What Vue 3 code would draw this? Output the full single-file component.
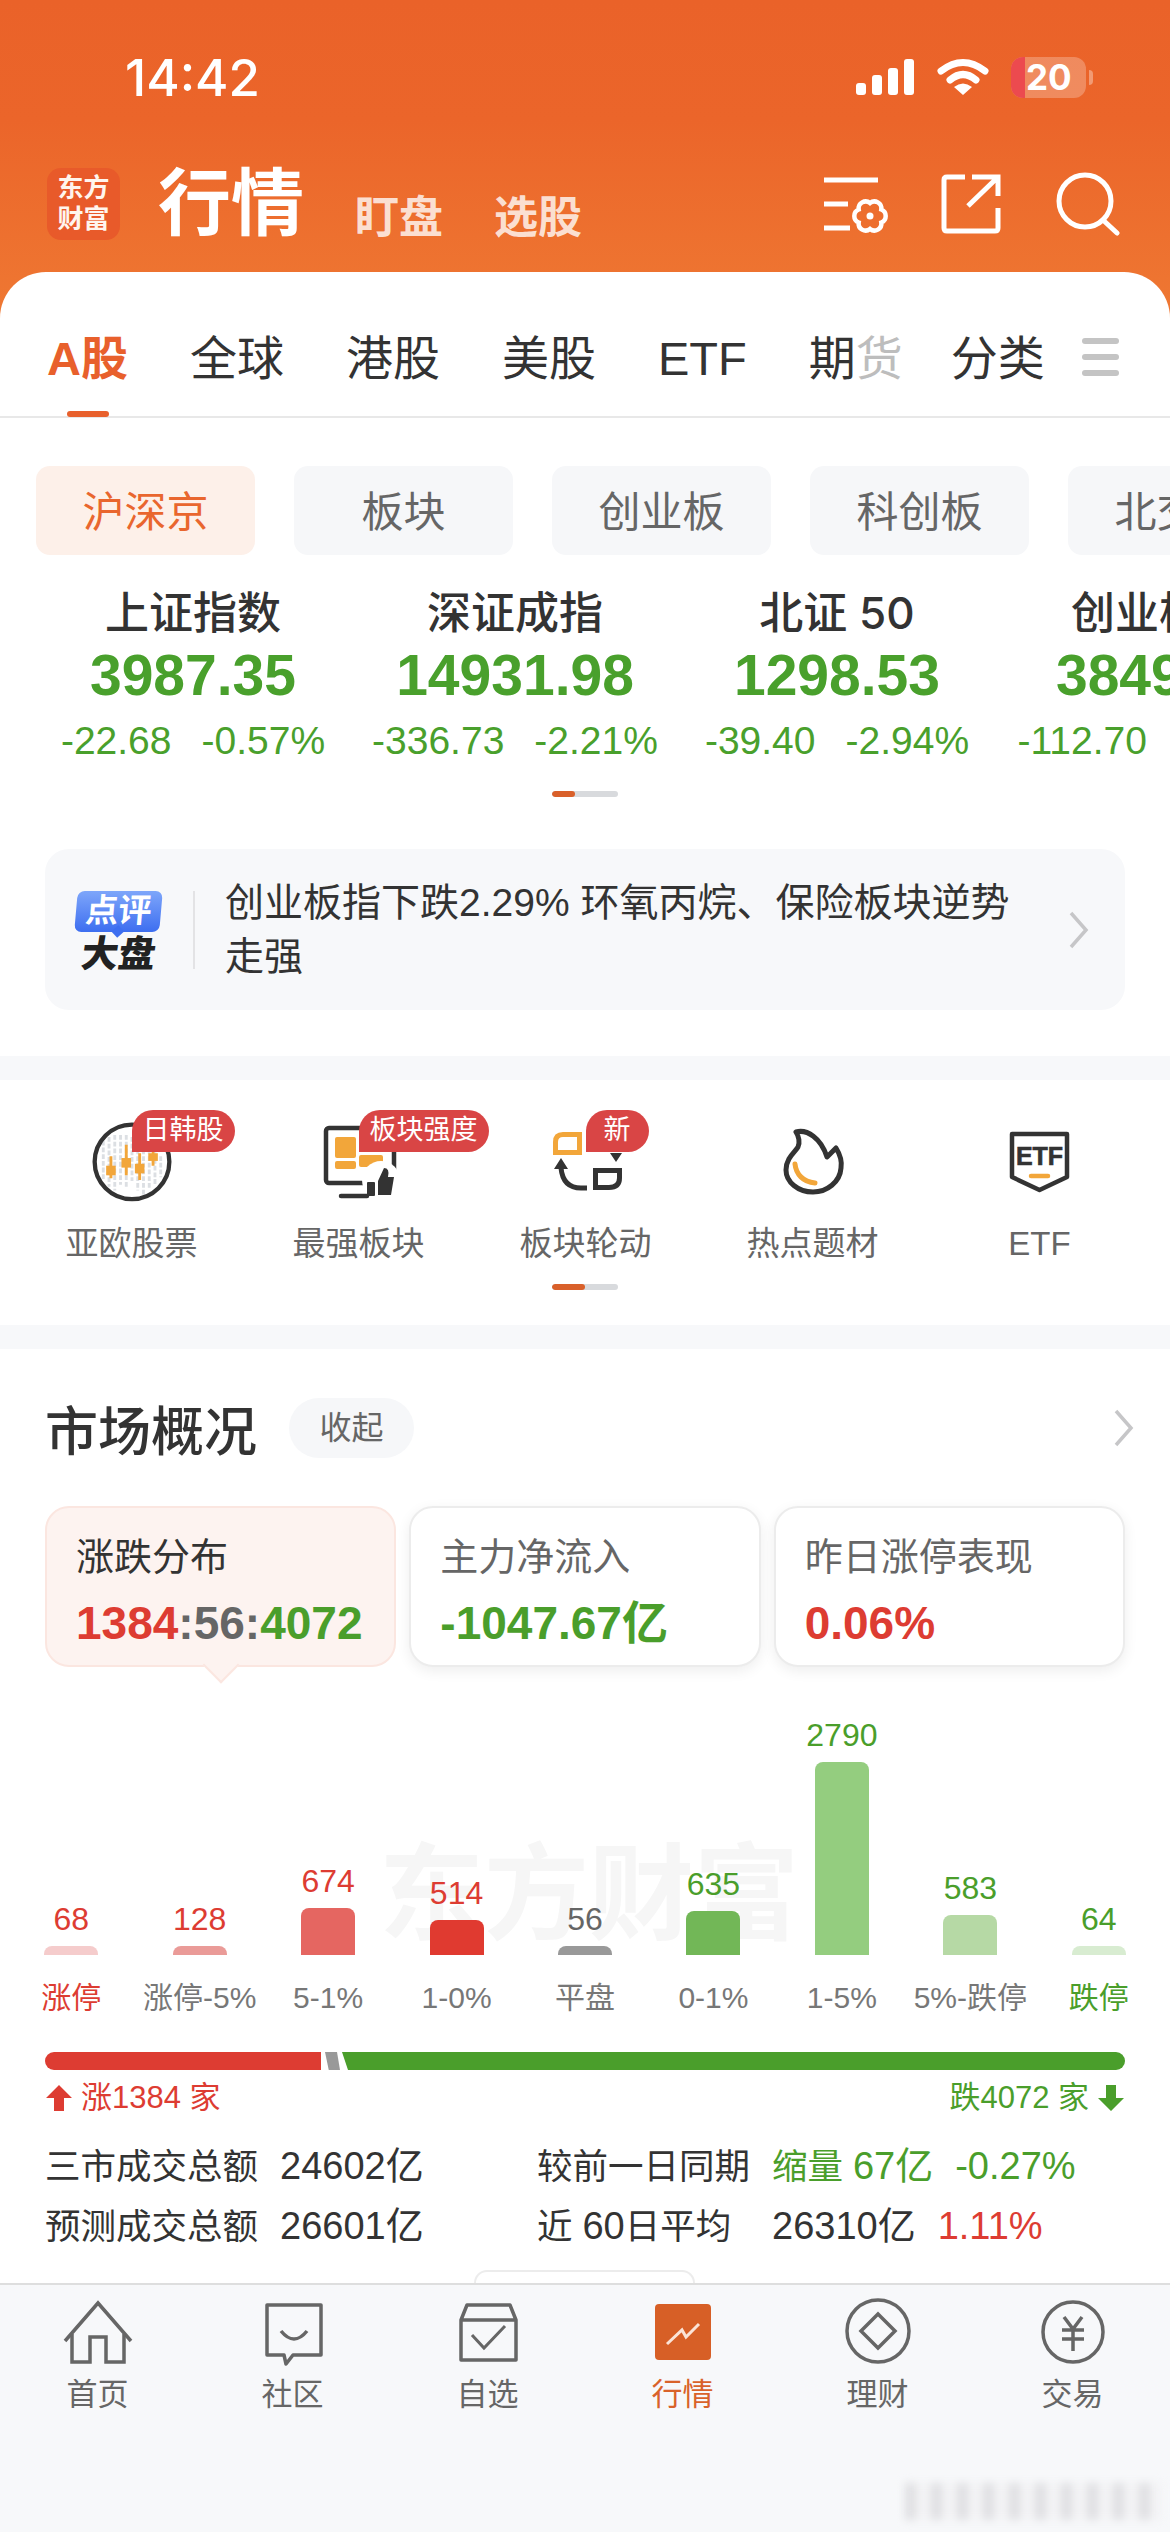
<template>
  <div class="app">
    <div class="top">
      <div class="status-bar">
        <span class="time">14:42</span>
        <div class="status-icons">
          <svg width="60" height="38" viewBox="0 0 60 38">
            <rect x="1" y="25" width="10" height="12" rx="3" fill="#fff" />
            <rect x="17" y="17" width="10" height="20" rx="3" fill="#fff" />
            <rect x="33" y="10" width="10" height="27" rx="3" fill="#fff" />
            <rect x="49" y="1" width="10" height="36" rx="3" fill="#fff" />
          </svg>
          <svg width="52" height="38" viewBox="0 0 52 38" fill="none">
            <path d="M4 13 Q26 -4 48 13" stroke="#fff" stroke-width="7" stroke-linecap="round" />
            <path d="M13 22 Q26 11 39 22" stroke="#fff" stroke-width="7" stroke-linecap="round" />
            <path d="M26 37 L17 29 Q26 22 35 29 Z" fill="#fff" />
          </svg>
          <div class="battery">
            <span class="battery-low"></span>
            <span class="battery-num">20</span>
            <span class="battery-tip"></span>
          </div>
        </div>
      </div>

      <div class="nav">
        <div class="logo"><span>东方</span><span>财富</span></div>
        <span class="nav-title">行情</span>
        <span class="nav-sub">盯盘</span>
        <span class="nav-sub">选股</span>
        <div class="nav-icons">
          <svg width="66" height="66" viewBox="0 0 66 66" fill="none" stroke="#fff" stroke-width="5">
            <path d="M0 9 H54 M0 33 H24 M0 57 H26" />
            <g transform="translate(46 45)">
              <path d="M11.3 -6.5 A7 7 0 0 1 11.3 6.5 A7 7 0 0 1 0 13 A7 7 0 0 1 -11.3 6.5 A7 7 0 0 1 -11.3 -6.5 A7 7 0 0 1 0 -13 A7 7 0 0 1 11.3 -6.5 Z" stroke-width="4.5" />
              <circle r="3.5" fill="#fff" stroke="none" />
            </g>
          </svg>
          <svg width="64" height="66" viewBox="0 0 64 66" fill="none" stroke="#fff" stroke-width="5">
            <path d="M25 6 H7 Q4 6 4 9 V57 Q4 60 7 60 H55 Q58 60 58 57 V37" />
            <path d="M32 6 H58 V25 M28 35 L57 7" />
          </svg>
          <svg width="66" height="66" viewBox="0 0 66 66" fill="none" stroke="#fff" stroke-width="5">
            <circle cx="31" cy="30" r="26" />
            <path d="M49 49 L63 62" stroke-linecap="round" />
          </svg>
        </div>
      </div>

      <div class="tabs">
        <span class="tab active">A股</span>
        <span class="tab">全球</span>
        <span class="tab">港股</span>
        <span class="tab">美股</span>
        <span class="tab">ETF</span>
        <span class="tab">期<i class="faded">货</i></span>
        <span class="tab tab-last">分类</span>
        <span class="tab-menu"><b></b><b></b><b></b></span>
      </div>
    </div>

    <div class="main">
      <div class="chips">
        <span v-for="(c, i) in chips" :key="c" :class="['chip', { on: i === 0 }]">{{ c }}</span>
      </div>

      <div class="indexes">
        <div v-for="item in indexes" :key="item.name" class="index-card">
          <div class="index-name">{{ item.name }}</div>
          <div class="index-value">{{ item.value }}</div>
          <div class="index-change">
            <span>{{ item.diff }}</span>
            <span>{{ item.pct }}</span>
          </div>
        </div>
      </div>
      <div class="dots dots-short"><i></i></div>

      <div class="comment">
        <div class="comment-icon">
          <div class="bubble">点评</div>
          <div class="bubble-sub">大盘</div>
        </div>
        <div class="comment-text">创业板指下跌2.29% 环氧丙烷、保险板块逆势走强</div>
        <svg class="comment-arrow" width="20" height="38" viewBox="0 0 20 38" fill="none" stroke="#c6c6c8" stroke-width="3.5">
          <path d="M2 2 L17 19 L2 36" />
        </svg>
      </div>

      <div class="band"></div>

      <div class="shortcuts">
        <div class="shortcut">
          <div class="shortcut-icon">
            <svg width="100" height="90" viewBox="0 0 100 94" fill="none">
              <g stroke="#dcdfe3" stroke-width="3" stroke-dasharray="5 2">
                <path d="M20 28 V70 M26 24 V76 M32 22 V80 M38 22 V74 M44 22 V78 M50 24 V70 M56 30 V80 M62 30 V84 M68 30 V78 M74 40 V74 M80 44 V66" />
              </g>
              <g stroke="#f2a63a" stroke-width="3">
                <path d="M28 44 V67 M44 32 V64 M58 41 V69 M72 36 V54" />
              </g>
              <g fill="#f2a63a">
                <rect x="23" y="54" width="10" height="10" />
                <rect x="39" y="46" width="10" height="10" />
                <rect x="53" y="52" width="10" height="10" />
                <rect x="67" y="41" width="10" height="8" />
              </g>
              <circle cx="50" cy="50" r="39" stroke="#333" stroke-width="4.5" />
            </svg>
          </div>
          <span class="badge">日韩股</span>
          <div class="shortcut-label">亚欧股票</div>
        </div>

        <div class="shortcut">
          <div class="shortcut-icon">
            <svg width="80" height="90" viewBox="-2 0 80 90" fill="none">
              <rect x="5" y="14" width="68" height="55" rx="3" stroke="#333" stroke-width="4.5" />
              <path d="M20 82 H46" stroke="#333" stroke-width="4.5" stroke-linecap="round" />
              <rect x="14" y="23" width="21" height="21" rx="2" fill="#f2a63a" />
              <rect x="14" y="47" width="21" height="8" rx="2" fill="#f2a63a" />
              <rect x="38" y="41" width="24" height="12" rx="2" fill="#f2a63a" />
              <circle cx="60" cy="66" r="19" fill="#fff" />
              <rect x="46" y="68" width="8" height="14" rx="1" fill="#333" />
              <path d="M57 67 L63 54 Q69 54 67 63 H73 L70 81 H57 Z" fill="#333" />
            </svg>
          </div>
          <span class="badge">板块强度</span>
          <div class="shortcut-label">最强板块</div>
        </div>

        <div class="shortcut">
          <div class="shortcut-icon">
            <svg width="80" height="90" viewBox="-3 0 80 90" fill="none">
              <path d="M6.5 38.5 V28 Q6.5 20.5 14 20.5 H30.5 V38.5 Z" stroke="#f2a63a" stroke-width="5" />
              <path d="M46.5 56.5 H70.5 V64 Q70.5 73.5 60 73.5 H46.5 Z" stroke="#333" stroke-width="5" />
              <path d="M38 74 H32 Q14 74 12 54" stroke="#333" stroke-width="5" />
              <path d="M12 44 L5 55 H19 Z M61 39 H73 L67 48 Z" fill="#333" />
            </svg>
          </div>
          <span class="badge badge-new">新</span>
          <div class="shortcut-label">板块轮动</div>
        </div>

        <div class="shortcut">
          <div class="shortcut-icon">
            <svg width="80" height="90" viewBox="2 0 80 90" fill="none">
              <path d="M25 18 C36 15 50 24 56 43 C59 40 62 37 65 34 C70 42 71 48 70 54 C69 68 56 78 42 78 C27 78 15 68 15 56 C15 44 24 38 27 33 C29 29 28 22 25 18 Z" stroke="#333" stroke-width="5" stroke-linejoin="round" />
              <path d="M24 50 C25 60 32 68 44 69" stroke="#f2a63a" stroke-width="5" stroke-linecap="round" />
            </svg>
          </div>
          <div class="shortcut-label">热点题材</div>
        </div>

        <div class="shortcut">
          <div class="shortcut-icon">
            <svg width="84" height="90" viewBox="0 0 84 90" fill="none">
              <path d="M14 20 H69 V63 L41.5 76 L14 63 Z" stroke="#333" stroke-width="4.5" stroke-linejoin="round" />
              <text x="41.5" y="51" text-anchor="middle" class="etf-mark">ETF</text>
              <path d="M33 62 H50" stroke="#f2a63a" stroke-width="4.5" stroke-linecap="round" />
            </svg>
          </div>
          <div class="shortcut-label">ETF</div>
        </div>
      </div>
      <div class="dots dots-half"><i></i></div>

      <div class="band band-second"></div>

      <div class="market">
        <div class="market-head">
          <span class="market-title">市场概况</span>
          <span class="market-pill">收起</span>
          <svg class="market-arrow" width="20" height="38" viewBox="0 0 20 38" fill="none" stroke="#c6c6c8" stroke-width="3.5">
            <path d="M2 2 L17 19 L2 36" />
          </svg>
        </div>

        <div class="market-cards">
          <div class="market-card selected">
            <div class="card-label dark">涨跌分布</div>
            <div class="card-value"><span class="red">1384</span><span class="grey">:56:</span><span class="green">4072</span></div>
          </div>
          <div class="market-card">
            <div class="card-label">主力净流入</div>
            <div class="card-value green">-1047.67亿</div>
          </div>
          <div class="market-card">
            <div class="card-label">昨日涨停表现</div>
            <div class="card-value red">0.06%</div>
          </div>
        </div>

        <div class="chart">
          <div class="chart-mark">东方财富</div>
          <div class="chart-cols">
            <div v-for="b in bars" :key="b.label" class="chart-col">
              <span :class="['bar-value', b.tone]">{{ b.value }}</span>
              <div class="bar" :style="{ height: b.height + 'px', background: b.color }"></div>
            </div>
          </div>
        </div>
        <div class="chart-labels">
          <span v-for="b in bars" :key="b.label" :class="b.labelTone">{{ b.label }}</span>
        </div>

        <div class="ratio">
          <i class="ratio-up"></i>
          <i class="ratio-flat"></i>
          <i class="ratio-down"></i>
        </div>
        <div class="legend">
          <span class="legend-item red">
            <svg width="28" height="28" viewBox="0 0 28 28"><path d="M14 1 L27 14 H19 V27 H9 V14 H1 Z" fill="#dd3c32" /></svg>
            涨1384 家
          </span>
          <span class="legend-item green">
            跌4072 家
            <svg width="28" height="28" viewBox="0 0 28 28"><path d="M14 27 L27 14 H19 V1 H9 V14 H1 Z" fill="#4a9e2b" /></svg>
          </span>
        </div>

        <div class="stats">
          <span>三市成交总额</span>
          <span class="num">24602亿</span>
          <span>较前一日同期</span>
          <span class="stat-extra green"><span>缩量 <b class="num">67亿</b></span><span class="num">-0.27%</span></span>
          <span>预测成交总额</span>
          <span class="num">26601亿</span>
          <span>近 <b class="num">60</b>日平均</span>
          <span class="stat-extra"><span class="num">26310亿</span><span class="num red">1.11%</span></span>
        </div>
      </div>
    </div>

    <div class="tabbar">
      <span class="pull"></span>
      <div class="bar-item">
        <svg width="70" height="70" viewBox="0 0 70 70" fill="none" stroke="#666" stroke-width="3.5">
          <path d="M2 44 L35 6 L68 44" />
          <path d="M9 37 V65 H27 V40 H43 V65 H61 V37" />
        </svg>
        <span>首页</span>
      </div>
      <div class="bar-item">
        <svg width="70" height="70" viewBox="0 0 70 70" fill="none" stroke="#666" stroke-width="3.5">
          <path d="M9 8 H63 V58 H35 L28 67 L26 58 H9 Z" stroke-linejoin="round" />
          <path d="M23 34 Q36 50 49 34" />
        </svg>
        <span>社区</span>
      </div>
      <div class="bar-item">
        <svg width="70" height="70" viewBox="0 0 70 70" fill="none" stroke="#666" stroke-width="3.5">
          <path d="M8 23 L14 8 H57 L63 23 V63 H8 Z M8 23 H63" stroke-linejoin="round" />
          <path d="M19 38 L31 51 L52 29" stroke-width="3" />
        </svg>
        <span>自选</span>
      </div>
      <div class="bar-item active">
        <svg width="70" height="70" viewBox="0 0 70 70" fill="none">
          <rect x="7" y="7" width="56" height="56" rx="4" fill="#d75f26" />
          <path d="M19 47 L34 33 L38 40 L51 27" stroke="#fbe3d6" stroke-width="3" />
        </svg>
        <span>行情</span>
      </div>
      <div class="bar-item">
        <svg width="70" height="70" viewBox="0 0 70 70" fill="none" stroke="#666" stroke-width="3.5">
          <circle cx="35" cy="34" r="31" />
          <path d="M35 17 L52 34 L35 51 L18 34 Z" />
        </svg>
        <span>理财</span>
      </div>
      <div class="bar-item">
        <svg width="70" height="70" viewBox="0 0 70 70" fill="none" stroke="#666" stroke-width="3.5">
          <circle cx="35" cy="35" r="30" />
          <path d="M26 20 L35 32 L44 20 M24 33 H46 M24 42 H46 M35 32 V54" />
        </svg>
        <span>交易</span>
      </div>
      <div class="blur-mark"></div>
    </div>
  </div>
</template>

<script setup>
const chips = ['沪深京', '板块', '创业板', '科创板', '北交所']

const indexes = [
  { name: '上证指数', value: '3987.35', diff: '-22.68', pct: '-0.57%' },
  { name: '深证成指', value: '14931.98', diff: '-336.73', pct: '-2.21%' },
  { name: '北证 50', value: '1298.53', diff: '-39.40', pct: '-2.94%' },
  { name: '创业板指', value: '3849.12', diff: '-112.70', pct: '-2.29%' }
]

const bars = [
  { label: '涨停', value: 68, height: 9, color: '#f5cccc', tone: 'red', labelTone: 'red' },
  { label: '涨停-5%', value: 128, height: 9, color: '#ea9b98', tone: 'red', labelTone: '' },
  { label: '5-1%', value: 674, height: 47, color: '#e56661', tone: 'red', labelTone: '' },
  { label: '1-0%', value: 514, height: 35, color: '#e03a30', tone: 'red', labelTone: '' },
  { label: '平盘', value: 56, height: 9, color: '#999999', tone: 'grey', labelTone: '' },
  { label: '0-1%', value: 635, height: 44, color: '#72b757', tone: 'green', labelTone: '' },
  { label: '1-5%', value: 2790, height: 193, color: '#94cd7f', tone: 'green', labelTone: '' },
  { label: '5%-跌停', value: 583, height: 40, color: '#b6d9a5', tone: 'green', labelTone: '' },
  { label: '跌停', value: 64, height: 9, color: '#d8ecd1', tone: 'green', labelTone: 'green' }
]
</script>

<style>
html,
body {
  margin: 0;
  background: #fff;
}
</style>

<style scoped>
.app {
  width: 1170px;
  height: 2532px;
  display: flex;
  flex-direction: column;
  overflow: hidden;
  background: #fff;
  color: #333;
  font-family: "Liberation Sans", "Noto Sans CJK SC", sans-serif;
}

.top {
  background: linear-gradient(180deg, #ea6229 0, #eb652a 120px, #ef7933 330px);
}

.status-bar {
  height: 154px;
  display: flex;
  align-items: center;
  justify-content: space-between;
  padding: 0 84px 0 125px;
  color: #fff;
}

.time {
  font-family: Inter, sans-serif;
  font-size: 51px;
  font-weight: 500;
}

.status-icons {
  display: flex;
  align-items: center;
  gap: 22px;
}

.battery {
  position: relative;
  width: 75px;
  height: 41px;
  border-radius: 12px;
  background: rgba(255, 255, 255, 0.25);
  display: flex;
  align-items: center;
  padding-left: 15px;
  box-sizing: border-box;
}

.battery-low {
  position: absolute;
  left: 0;
  top: 0;
  bottom: 0;
  width: 14px;
  border-radius: 12px 0 0 12px;
  background: #ec4a4f;
}

.battery-num {
  position: relative;
  font-family: Inter, sans-serif;
  font-size: 35px;
  font-weight: 700;
}

.battery-tip {
  position: absolute;
  right: -7px;
  top: 13px;
  width: 4px;
  height: 15px;
  border-radius: 0 4px 4px 0;
  background: rgba(255, 255, 255, 0.35);
}

.nav {
  height: 100px;
  margin-bottom: 18px;
  display: flex;
  align-items: center;
  padding: 0 50px 0 47px;
  color: #fff;
}

.logo {
  width: 73px;
  height: 72px;
  border-radius: 14px;
  background: #e85a2a;
  display: flex;
  flex-direction: column;
  align-items: center;
  justify-content: center;
  font-size: 26px;
  line-height: 31px;
  font-weight: 700;
  color: #fff5ee;
}

.nav-title {
  margin: 0 51px 0 38px;
  font-size: 73px;
  line-height: 80px;
  font-weight: 700;
}

.nav-sub {
  margin: 28px 51px 0 0;
  font-size: 44px;
  line-height: 50px;
  font-weight: 700;
  color: rgba(255, 255, 255, 0.8);
}

.nav-icons {
  margin-left: auto;
  display: flex;
  gap: 50px;
}

.tabs {
  position: relative;
  height: 146px;
  box-sizing: border-box;
  display: flex;
  align-items: flex-start;
  padding: 60px 53px 0 47px;
  gap: 62px;
  background: #fff;
  border-radius: 46px 46px 0 0;
  border-bottom: 2px solid #e8e8e8;
}

.tab {
  position: relative;
  font-size: 47px;
  line-height: 54px;
  color: #333;
  white-space: nowrap;
}

.tab.active {
  color: #e8602c;
  font-weight: 700;
}

.tab.active::after {
  content: "";
  position: absolute;
  left: 20px;
  top: 79px;
  width: 42px;
  height: 6px;
  border-radius: 3px;
  background: #e8602c;
}

.faded {
  font-style: normal;
  color: #bdbdbd;
}

.tab-last {
  margin-left: -14px;
}

.tab-menu {
  flex: none;
  width: 37px;
  height: 38px;
  margin: 6px 0 0 -25px;
  display: flex;
  flex-direction: column;
  justify-content: space-between;
}

.tab-menu b {
  height: 6px;
  border-radius: 3px;
  background: #c4c4c4;
}

.main {
  flex: 1;
  min-height: 0;
  overflow: hidden;
}

.chips {
  display: flex;
  gap: 39px;
  padding: 48px 0 0 36px;
  overflow: hidden;
}

.chip {
  flex: none;
  width: 219px;
  height: 89px;
  line-height: 94px;
  text-align: center;
  border-radius: 14px;
  background: #f6f7f9;
  color: #666;
  font-size: 42px;
}

.chip.on {
  background: #fdf0e9;
  color: #e9662e;
}

.indexes {
  display: flex;
  padding: 36px 0 0 32px;
  overflow: hidden;
}

.index-card {
  flex: none;
  width: 322px;
  text-align: center;
  white-space: nowrap;
}

.index-name {
  font-family: Inter, "Noto Sans CJK SC", sans-serif;
  font-size: 44px;
  line-height: 44px;
  font-weight: 500;
  color: #333;
}

.index-value {
  margin-top: 10px;
  font-size: 57px;
  line-height: 60px;
  font-weight: 700;
  color: #49a02c;
}

.index-change {
  margin-top: 14px;
  display: flex;
  justify-content: center;
  gap: 30px;
  font-size: 39px;
  line-height: 44px;
  color: #49a02c;
}

.dots {
  position: relative;
  width: 66px;
  height: 6px;
  margin: 28px auto 0 552px;
  border-radius: 3px;
  background: #d8dadd;
  overflow: hidden;
}

.dots i {
  position: absolute;
  left: 0;
  top: 0;
  bottom: 0;
  border-radius: 3px;
  background: #d9602a;
}

.dots-short i {
  width: 23px;
}

.dots-half {
  margin-top: 18px;
}

.dots-half i {
  width: 33px;
}

.comment {
  margin: 52px 45px 0;
  height: 161px;
  box-sizing: border-box;
  display: flex;
  align-items: center;
  padding: 0 36px 0 31px;
  border-radius: 24px;
  background: #f7f8fa;
}

.comment-icon {
  flex: none;
  width: 85px;
  padding-right: 32px;
  margin-right: 30px;
  height: 78px;
  border-right: 2px solid #e3e3e5;
  box-sizing: content-box;
  text-align: center;
}

.bubble {
  position: relative;
  height: 41px;
  line-height: 40px;
  border-radius: 7px;
  background: linear-gradient(180deg, #7ea6fa, #3d6ef0);
  color: #fff;
  font-size: 33px;
  font-weight: 700;
  transform: skewX(-5deg);
}

.bubble::after {
  content: "";
  position: absolute;
  left: 50%;
  bottom: -4px;
  width: 9px;
  height: 9px;
  margin-left: -4px;
  background: #3d6ef0;
  transform: rotate(45deg);
}

.bubble-sub {
  margin-top: 6px;
  font-size: 37px;
  line-height: 34px;
  font-weight: 900;
  color: #222;
  transform: skewX(-8deg);
}

.comment-text {
  width: 805px;
  font-size: 39px;
  line-height: 54px;
  color: #333;
}

.comment-arrow {
  margin-left: auto;
  flex: none;
}

.band {
  height: 24px;
  margin-top: 46px;
  background: #f7f8fa;
}

.band-second {
  margin-top: 35px;
}

.shortcuts {
  display: flex;
  padding: 34px 0 0 18px;
}

.shortcut {
  position: relative;
  flex: none;
  width: 227px;
  text-align: center;
}

.shortcut-icon {
  height: 90px;
}

.shortcut-icon svg {
  display: block;
  margin: 0 auto;
}

.etf-mark {
  font-size: 25px;
  font-weight: 700;
  fill: #333;
  stroke: #333;
  stroke-width: 0.6px;
  font-family: "Liberation Sans", sans-serif;
}

.badge {
  position: absolute;
  left: 50%;
  top: -4px;
  height: 42px;
  line-height: 41px;
  padding: 0 11px;
  border-radius: 21px 21px 21px 0;
  background: #d94545;
  color: #fff;
  font-size: 27px;
  white-space: nowrap;
}

.badge-new {
  padding: 0 18px;
}

.shortcut-label {
  margin-top: 18px;
  font-size: 33px;
  line-height: 44px;
  color: #666;
}

.market {
  padding: 49px 45px 0;
}

.market-head {
  display: flex;
  align-items: center;
  height: 60px;
}

.market-title {
  font-size: 53px;
  font-weight: 500;
  color: #333;
}

.market-pill {
  margin-left: 32px;
  width: 125px;
  height: 60px;
  line-height: 60px;
  text-align: center;
  border-radius: 30px;
  background: #f6f7f9;
  color: #666;
  font-size: 32px;
}

.market-arrow {
  margin-left: auto;
  margin-right: -9px;
}

.market-cards {
  margin-top: 48px;
  display: grid;
  grid-template-columns: repeat(3, 1fr);
  gap: 13px;
}

.market-card {
  position: relative;
  height: 161px;
  box-sizing: border-box;
  padding: 25px 0 0 29px;
  border: 2px solid #ececec;
  border-radius: 24px;
  background: #fff;
  box-shadow: 0 4px 14px rgba(0, 0, 0, 0.07);
}

.market-card.selected {
  background: #fdf3f0;
  border-color: #fbe6e0;
  box-shadow: none;
}

.market-card.selected::after {
  content: "";
  position: absolute;
  left: 50%;
  bottom: -13px;
  width: 24px;
  height: 24px;
  margin-left: -13px;
  background: #fdf3f0;
  border-right: 2px solid #fbe6e0;
  border-bottom: 2px solid #fbe6e0;
  transform: rotate(45deg);
}

.card-label {
  font-size: 38px;
  line-height: 48px;
  color: #666;
}

.card-label.dark {
  color: #333;
}

.card-value {
  margin-top: 16px;
  font-size: 46px;
  line-height: 52px;
  font-weight: 700;
  white-space: nowrap;
}

.red {
  color: #dd3c32;
}

.green {
  color: #4a9e2b;
}

.grey {
  color: #666;
}

.chart {
  position: relative;
  margin: 33px -38px 0;
  height: 255px;
}

.chart-mark {
  position: absolute;
  left: 372px;
  top: 145px;
  font-size: 105px;
  line-height: 100px;
  font-weight: 700;
  color: #f6f6f6;
  white-space: nowrap;
}

.chart-cols {
  position: relative;
  height: 100%;
  display: grid;
  grid-template-columns: repeat(9, 1fr);
  align-items: end;
}

.chart-col {
  display: flex;
  flex-direction: column;
  align-items: center;
}

.bar-value {
  font-size: 32px;
  line-height: 36px;
  margin-bottom: 9px;
}

.bar {
  width: 54px;
  border-radius: 8px 8px 0 0;
}

.chart-labels {
  margin: 25px -38px 0;
  display: grid;
  grid-template-columns: repeat(9, 1fr);
  font-size: 30px;
  line-height: 36px;
  text-align: center;
  color: #777;
  white-space: nowrap;
}

.ratio {
  margin-top: 36px;
  height: 18px;
  display: flex;
  border-radius: 9px;
  overflow: hidden;
}

.ratio i {
  display: block;
  height: 100%;
}

.ratio-up {
  width: 276px;
  background: #dd3c32;
}

.ratio-flat {
  width: 15px;
  margin-left: 4px;
  background: #999;
  clip-path: polygon(0 0, 80% 0, 100% 100%, 25% 100%);
}

.ratio-down {
  flex: 1;
  margin-left: 2px;
  background: #4a9e2b;
  clip-path: polygon(0 0, 100% 0, 100% 100%, 6px 100%);
}

.legend {
  margin-top: 8px;
  height: 40px;
  display: flex;
  justify-content: space-between;
  font-size: 31px;
  line-height: 40px;
}

.legend-item {
  display: flex;
  align-items: center;
  gap: 8px;
}

.stats {
  margin-top: 18px;
  display: grid;
  grid-template-columns: 235px 257px 235px 1fr;
  grid-auto-rows: 60px;
  align-items: baseline;
  font-size: 35.5px;
  line-height: 60px;
  color: #333;
  white-space: nowrap;
}

.num {
  font-size: 38px;
  font-weight: 400;
}

.stat-extra {
  display: flex;
  align-items: baseline;
  gap: 22px;
}

.tabbar {
  position: relative;
  flex: none;
  height: 249px;
  box-sizing: border-box;
  display: grid;
  grid-template-columns: repeat(6, 1fr);
  align-items: start;
  padding-top: 12px;
  background: #f7f8fa;
  border-top: 2px solid #dedede;
}

.pull {
  position: absolute;
  left: 474px;
  top: -15px;
  width: 221px;
  height: 13px;
  box-sizing: border-box;
  border: 2px solid #ececec;
  border-bottom: none;
  border-radius: 26px 26px 0 0;
  background: #fff;
}

.bar-item {
  display: flex;
  flex-direction: column;
  align-items: center;
  font-size: 31px;
  line-height: 40px;
  color: #666;
}

.bar-item span {
  margin-top: 8px;
}

.bar-item.active {
  color: #d9622a;
}

.blur-mark {
  position: absolute;
  right: 8px;
  bottom: 12px;
  width: 257px;
  height: 37px;
  background: repeating-linear-gradient(90deg, #dfdfe2 0 11px, #f3f3f5 11px 26px);
  filter: blur(4px);
}
</style>
